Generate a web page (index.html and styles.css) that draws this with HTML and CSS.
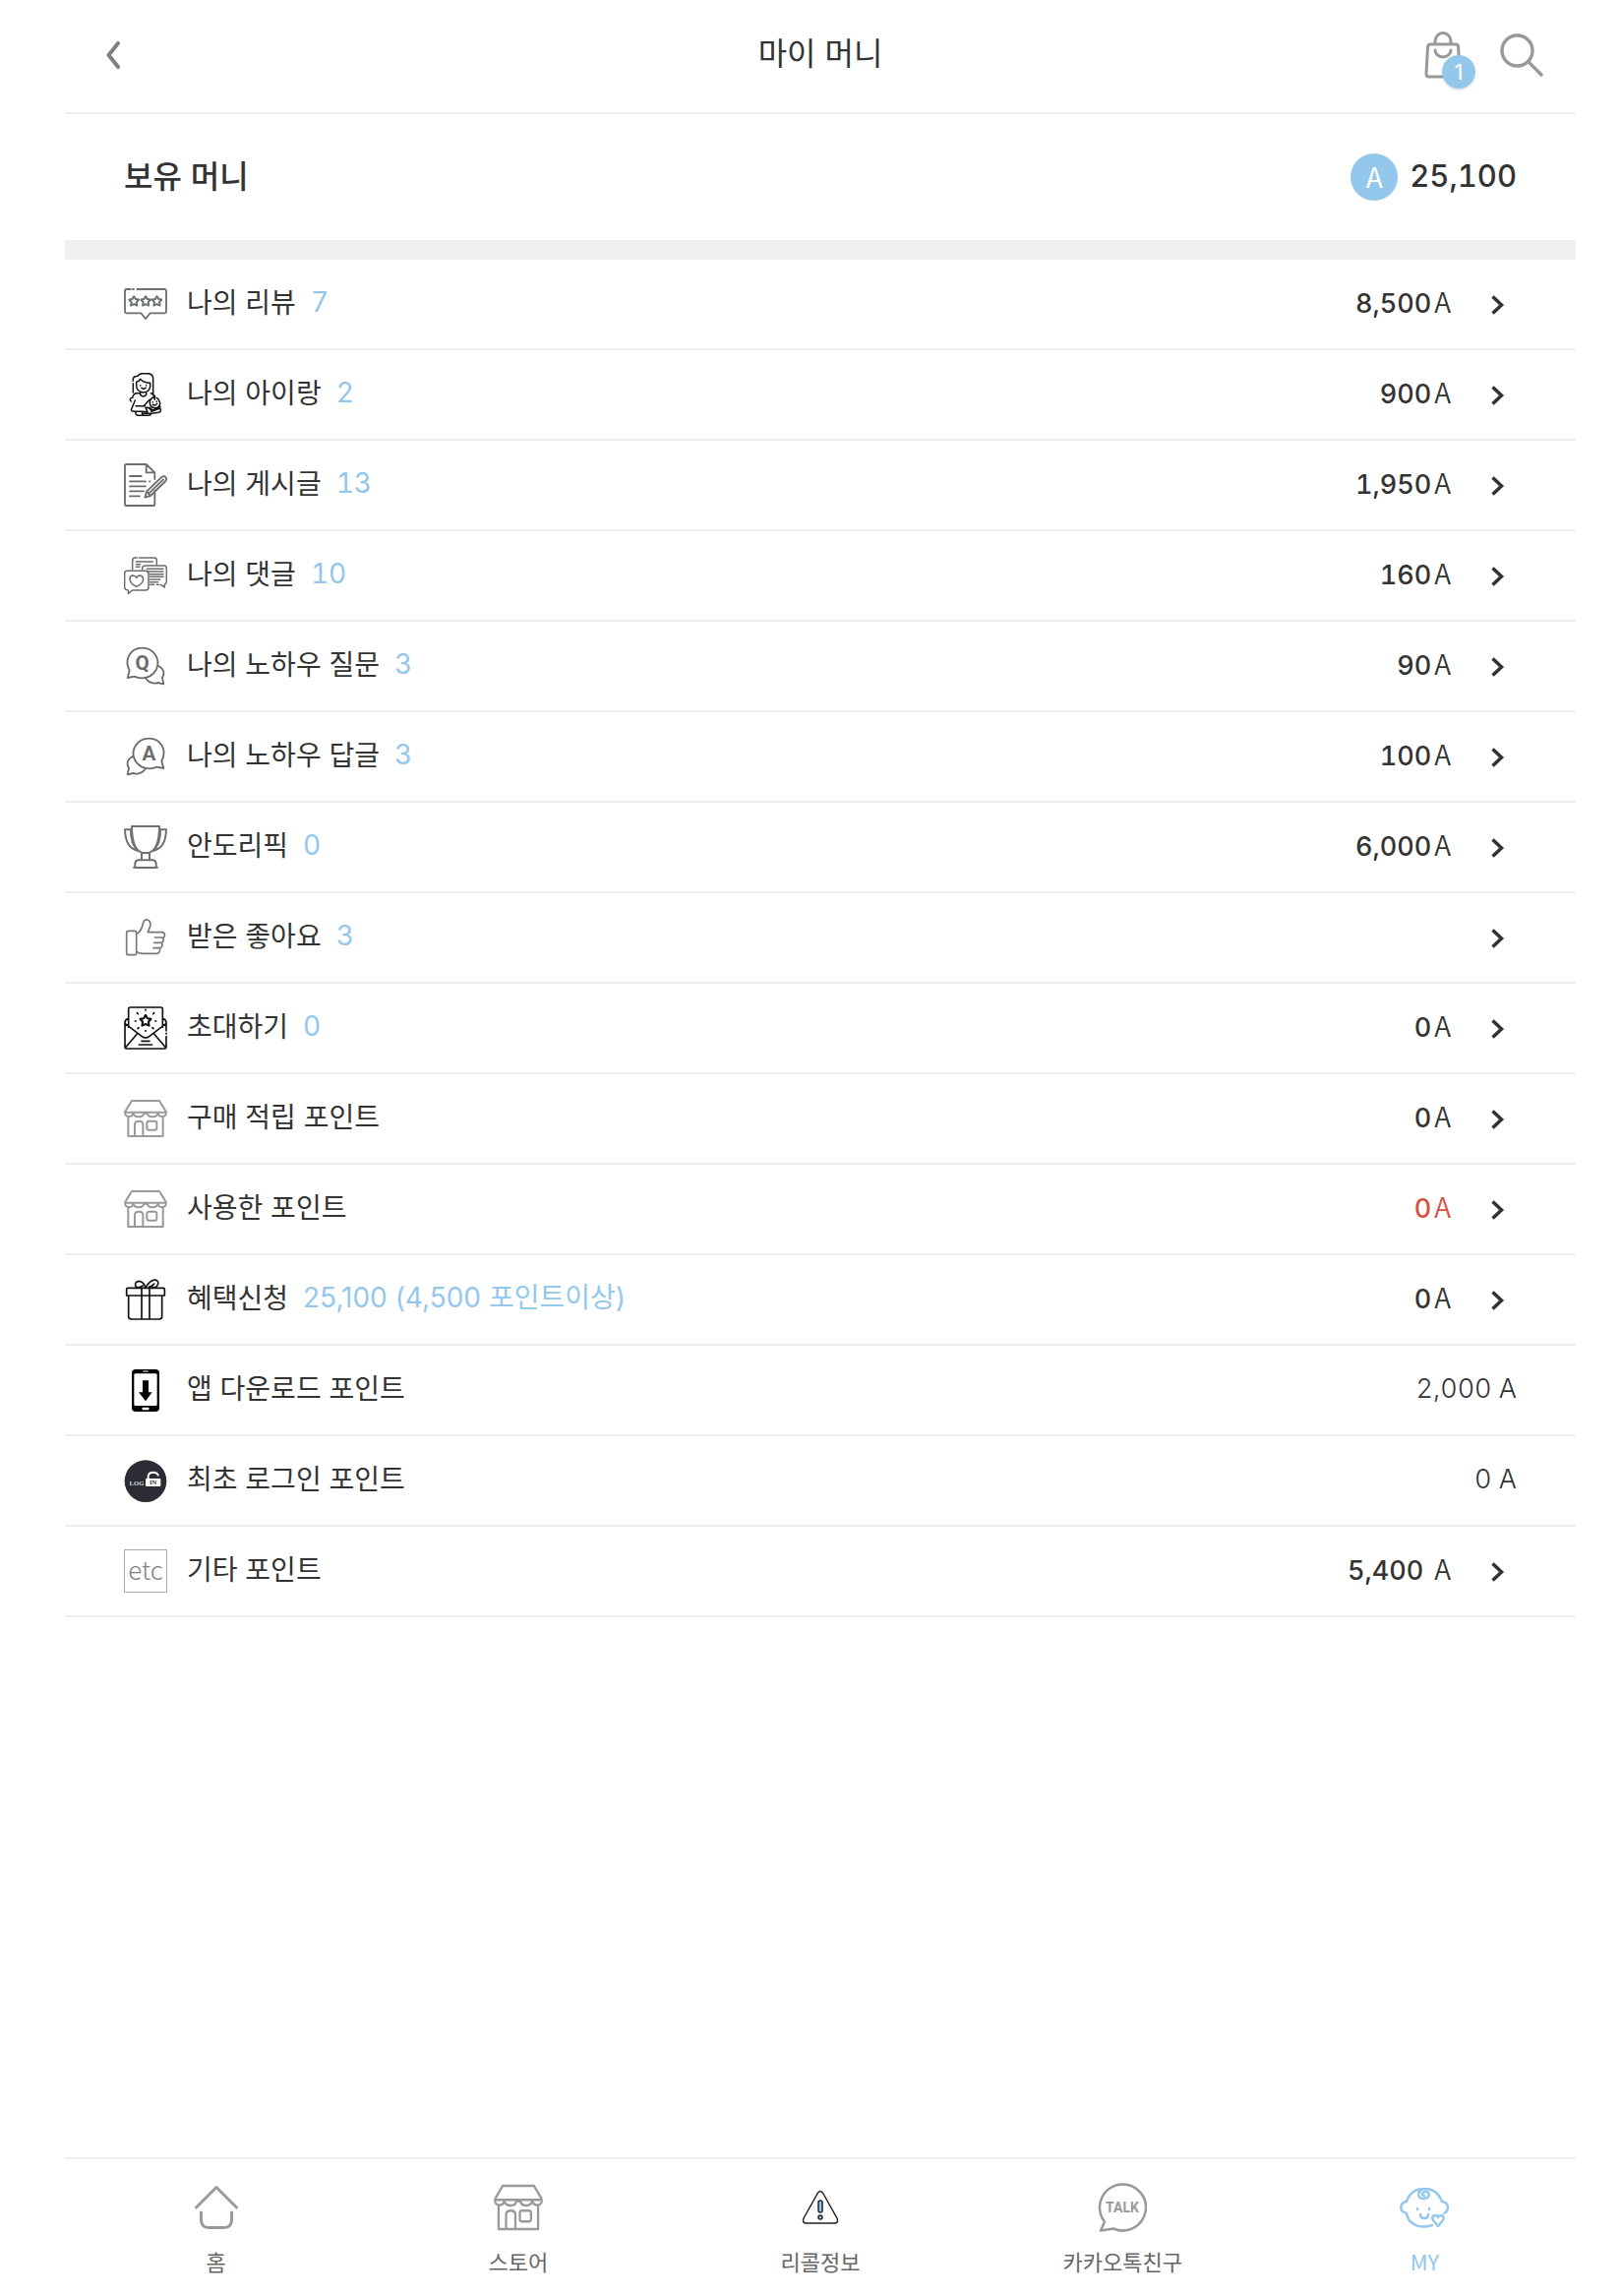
FILE: index.html
```html
<!DOCTYPE html>
<html lang="ko">
<head>
<meta charset="utf-8">
<meta name="viewport" content="width=device-width, initial-scale=1">
<title>마이 머니</title>
<link rel="stylesheet" href="styles.css">
</head>
<body>
<svg class="defs" aria-hidden="true">
  <symbol id="star" viewBox="-16 -16 32 32"><path d="M0-14 4.500-6 13.500-4.500 7 2.500 8.500 12 0 8-8.500 12-7 2.500-13.500-4.500-4.500-6Z"/></symbol>
  <symbol id="chevron" viewBox="0 0 14 20"><path d="M1.500 1.500 10.500 10 1.500 18.500" fill="none" stroke="currentColor" stroke-width="3.600"/></symbol>
  <symbol id="store" viewBox="0 0 132 132" preserveAspectRatio="none">
    <g fill="none" stroke="#999" stroke-width="6" stroke-linejoin="round">
      <path d="M24 12H108L128 44Q131 58 119 60Q106 61 104 50Q100 62 86 61Q74 61 72 52L66 50L60 52Q58 61 46 61Q32 62 28 50Q26 61 13 60Q1 58 4 44ZM4 47H128M28 47V52M104 47V52"/>
      <path d="M13 61V120H119V61M33 120V84Q33 74 46 74Q58 74 58 84V120"/>
      <rect x="70" y="74" width="30" height="27" rx="6"/>
    </g>
  </symbol>
</svg>
<div class="app">
  <header class="topbar">
    <button class="back" type="button" aria-label="뒤로">
      <svg width="14" height="28" viewBox="0 0 14 28" fill="none" stroke="#808080" stroke-width="4" stroke-linecap="round" stroke-linejoin="round"><path d="M12 2 2.500 14 12 26"/></svg>
    </button>
    <h1 class="title">마이 머니</h1>
    <nav class="tools" aria-label="도구">
      <a class="bag" href="#cart" aria-label="장바구니">
        <svg width="38" height="48" viewBox="0 0 38 48" fill="none" stroke="#999" stroke-width="3" stroke-linecap="round" stroke-linejoin="round"><path d="M6.500 13H32Q34.500 13 34.600 16L36 43Q36 46 33 46H5Q2 46 2 43L3.500 16Q3.700 13 6.500 13ZM11 12V10A8 8.500 0 0 1 27 10V12M11 19A8 7 0 0 0 27 19"/></svg>
        <span class="badge">1</span>
      </a>
      <a class="search" href="#search" aria-label="검색">
        <svg width="44" height="44" viewBox="0 0 44 44" fill="none" stroke="#999" stroke-width="3.400" stroke-linecap="round"><circle cx="17.500" cy="17.500" r="15.500"/><path d="M29 29 42 42"/></svg>
      </a>
    </nav>
  </header>

  <main>
    <section class="summary">
      <h2 class="summary-title">보유 머니</h2>
      <p class="balance"><span class="coin">A</span><strong class="total">25,100</strong></p>
    </section>

    <ul class="list">
      <li><a class="row" href="#review">
        <svg class="icon" viewBox="0 0 132 132" fill="none" stroke="#697174" stroke-width="5.500" stroke-linejoin="round" stroke-linecap="round"><path d="M20 21H8Q3 21 3 26V88Q3 94 8 94H52L66 111 80 94H124Q129 94 129 88V26Q129 21 124 21H40M27 21H30"/><use href="#star" x="13" y="40" width="35" height="35"/><use href="#star" x="49" y="40" width="35" height="35"/><use href="#star" x="83" y="40" width="35" height="35"/></svg>
        <span class="name">나의 리뷰</span><span class="count">7</span><span class="amount"><b>8,500</b>A</span><svg class="arrow"><use href="#chevron"/></svg></a></li>
      <li><a class="row" href="#child">
        <svg class="icon" viewBox="0 0 132 132" fill="none" stroke="#111" stroke-width="4.500" stroke-linejoin="round" stroke-linecap="round"><path d="M28 60V32M28 25V18Q30 10 42 10Q46 2 56 2H74Q89 3 89 18V66M38 28V40Q39 58 59 60Q78 58 80 42V31Q60 31 50 19Q46 27 38 28M50 38V39M68 38V39M54 46Q60 51 66 46M50 60V67Q59 77 68 67V60M48 62H38Q28 64 26 76Q14 78 22 87M82 62Q91 64 91 72M34 84 22 113Q23 118 30 118H56M36 101H64M60 102 78 82M36 118V124Q36 130 44 130H74Q83 130 82 124H60Q54 128 56 118L72 119 66 106Q80 104 84 118L110 108Q116 118 106 121L84 124M78 106 88 114 111 103"/><path d="M92 74Q78 78 79 92Q80 107 95 107Q110 106 110 92Q109 82 100 76M88 89V90M100 87V88M88 97Q95 102 101 94M94 70V82"/></svg>
        <span class="name">나의 아이랑</span><span class="count">2</span><span class="amount"><b>900</b>A</span><svg class="arrow"><use href="#chevron"/></svg></a></li>
      <li><a class="row" href="#posts">
        <svg class="icon" viewBox="0 0 132 132" fill="none" stroke="#6c6c6c" stroke-width="5.500" stroke-linejoin="round" stroke-linecap="round"><path d="M94 48V28L68 3H7Q3 3 3 7V125Q3 129 7 129H90Q94 129 94 125V84M68 3V28H94M18 39H53M18 55H66M78 55H79M18 70H66M18 85H60M18 100H48"/><path d="M64 104 69 86 116 41Q122 37 127 42Q132 48 127 54L81 99ZM69 86 81 99M76 92 120 49"/></svg>
        <span class="name">나의 게시글</span><span class="count">13</span><span class="amount"><b>1,950</b>A</span><svg class="arrow"><use href="#chevron"/></svg></a></li>
      <li><a class="row" href="#comments">
        <svg class="icon" viewBox="0 0 132 132" fill="none" stroke="#6c6c6c" stroke-width="4.500" stroke-linejoin="round" stroke-linecap="round"><path d="M40 12H34Q26 12 26 20V48M46 12H92Q100 12 100 20V34M37 24H88M37 32H50M37 40H48"/><path d="M56 48V43Q57 36 65 36H122Q130 36 130 44V84Q130 92 124 93V102L112 94M100 94H106M70 46H120M70 54H120M78 62H120M80 70H120M80 78H110M80 86H104M80 94H92"/><path d="M10 52H66Q75 52 75 61V102Q75 111 66 111H26L13 121V111Q2 110 2 102V61Q2 52 10 52ZM38 100Q17 90 18 76Q19 66 28 66Q36 67 38 73Q41 66 49 66Q59 68 59 77Q59 90 38 100Z"/></svg>
        <span class="name">나의 댓글</span><span class="count">10</span><span class="amount"><b>160</b>A</span><svg class="arrow"><use href="#chevron"/></svg></a></li>
      <li><a class="row" href="#questions">
        <svg class="icon" viewBox="0 0 132 132" fill="none" stroke="#6c6c6c" stroke-width="5.500" stroke-linejoin="round" stroke-linecap="round"><path d="M17 80C0 48 18 11 56 11C92 11 114 48 98 78C84 102 54 109 32 98L11 102Z"/><path d="M106 66Q130 80 117 102L121 121 104 117Q80 124 66 103"/><text class="glyph" x="56" y="77" font-size="62">Q</text></svg>
        <span class="name">나의 노하우 질문</span><span class="count">3</span><span class="amount"><b>90</b>A</span><svg class="arrow"><use href="#chevron"/></svg></a></li>
      <li><a class="row" href="#answers">
        <svg class="icon" viewBox="0 0 132 132" fill="none" stroke="#6c6c6c" stroke-width="5.500" stroke-linejoin="round" stroke-linecap="round"><path d="M115 80C132 48 114 11 76 11C40 11 18 48 34 78C48 102 78 109 100 98L121 102Z"/><path d="M26 66Q2 80 15 102L11 121 28 117Q52 124 66 103"/><text class="glyph" x="76" y="77" font-size="62">A</text></svg>
        <span class="name">나의 노하우 답글</span><span class="count">3</span><span class="amount"><b>100</b>A</span><svg class="arrow"><use href="#chevron"/></svg></a></li>
      <li><a class="row" href="#pick">
        <svg class="icon" viewBox="0 0 132 132" fill="none" stroke="#707070" stroke-width="6" stroke-linejoin="round"><path d="M24 3H108C108 54 98 77 76 84H56C34 77 24 54 24 3ZM24 13H3C4 46 15 73 44 78M21 13C20 42 28 65 44 78M108 13H129C128 46 117 73 88 78M111 13C112 42 104 65 88 78M54 84V105M78 84V105M34 129V118Q34 106 46 106H86Q98 106 98 118V129M28 129H104"/></svg>
        <span class="name">안도리픽</span><span class="count">0</span><span class="amount"><b>6,000</b>A</span><svg class="arrow"><use href="#chevron"/></svg></a></li>
      <li><a class="row" href="#likes">
        <svg class="icon" viewBox="0 0 132 132" fill="none" stroke="#787878" stroke-width="5" stroke-linejoin="round" stroke-linecap="round"><rect x="8" y="46" width="30" height="73" rx="6"/><path d="M38 56Q54 46 58 24Q62 10 71 12Q84 16 80 32L73 50H118Q126 52 124 62Q122 68 114 66H94M120 66Q122 80 114 82H92M116 82Q119 96 110 98H90M110 98Q111 113 102 115H58Q44 114 38 109"/></svg>
        <span class="name">받은 좋아요</span><span class="count">3</span><span class="amount"></span><svg class="arrow"><use href="#chevron"/></svg></a></li>
      <li><a class="row" href="#invite">
        <svg class="icon" viewBox="0 0 132 132" fill="none" stroke="#111" stroke-width="5" stroke-linejoin="round" stroke-linecap="round"><path d="M14 64V8Q14 3 19 3H113Q118 3 118 8V64M14 38Q3 40 3 50V122Q3 129 10 129H122Q129 129 129 122V92M129 82V84M129 74V50Q129 40 118 38M3 52 55 92Q66 100 77 92L129 52M5 125 40 84M127 125 92 84M54 106H78M46 117H86"/><path d="M66 10V12M40 20 43 23M92 20 89 23M34 45H37M95 45H98M42 68 45 65M90 68 87 65M66 74V76"/><use href="#star" x="46" y="24" width="40" height="40"/></svg>
        <span class="name">초대하기</span><span class="count">0</span><span class="amount"><b>0</b>A</span><svg class="arrow"><use href="#chevron"/></svg></a></li>
      <li><a class="row" href="#earned">
        <svg class="icon"><use href="#store"/></svg>
        <span class="name">구매 적립 포인트</span><span class="amount"><b>0</b>A</span><svg class="arrow"><use href="#chevron"/></svg></a></li>
      <li><a class="row" href="#used">
        <svg class="icon"><use href="#store"/></svg>
        <span class="name">사용한 포인트</span><span class="amount minus"><b>0</b>A</span><svg class="arrow"><use href="#chevron"/></svg></a></li>
      <li><a class="row" href="#benefit">
        <svg class="icon" viewBox="0 0 132 132" fill="none" stroke="#111" stroke-width="5" stroke-linejoin="round" stroke-linecap="round"><path d="M12 31H120Q124 31 124 35V54H8V35Q8 31 12 31ZM14 54V118Q14 126 22 126H108Q116 126 116 118V54M54 31V126M78 31V126M66 29Q59 10 45 10Q33 12 35 23Q37 31 45 29M46 30 57 24M66 29Q83 3 98 7Q109 12 102 23Q98 31 88 29M77 27Q88 25 92 18"/></svg>
        <span class="name">혜택신청</span><span class="count note">25,100 (4,500 포인트이상)</span><span class="amount"><b>0</b>A</span><svg class="arrow"><use href="#chevron"/></svg></a></li>
      <li><div class="row">
        <svg class="icon" viewBox="0 0 132 132"><rect x="24" y="3" width="84" height="129" rx="12" fill="#000"/><rect x="31" y="16" width="70" height="98" rx="4" fill="#fff"/><path d="M58 9H74" stroke="#fff" stroke-width="3"/><rect x="56" y="119" width="20" height="8" rx="2" fill="#fff"/><path d="M57 37H75V73H86L66 100 45 73H57Z" fill="#000"/></svg>
        <span class="name">앱 다운로드 포인트</span><span class="amount plain">2,000 A</span></div></li>
      <li><div class="row">
        <svg class="icon" viewBox="0 0 132 132"><circle cx="66" cy="68" r="64" fill="#2c2d34"/><rect x="66" y="60" width="46" height="24" rx="3" fill="#fff"/><path d="M74 62V52Q76 41 90 41Q103 42 105 52" fill="none" stroke="#fff" stroke-width="6"/><text class="login" x="39" y="80" fill="#ddd">LOG</text><text class="login" x="89" y="79" fill="#2c2d34">IN</text></svg>
        <span class="name">최초 로그인 포인트</span><span class="amount plain">0 A</span></div></li>
      <li><a class="row" href="#etc">
        <span class="icon etc">etc</span>
        <span class="name">기타 포인트</span><span class="amount"><b>5,400</b> A</span><svg class="arrow"><use href="#chevron"/></svg></a></li>
    </ul>
  </main>

  <nav class="tabs" aria-label="메뉴">
    <a class="tab" href="#home"><svg width="50" height="50" viewBox="0 0 50 50" fill="none" stroke="#999" stroke-width="3" stroke-linecap="round" stroke-linejoin="round"><path d="M4.500 25 25 4.500 45.500 25M9.500 30V38Q10 45.500 17 45.500H33Q40 45.500 40.500 38V30"/></svg><span>홈</span></a>
    <a class="tab" href="#store-page"><svg width="50" height="50" viewBox="0 0 50 50"><use href="#store" x="0" y="-2" width="50" height="54"/></svg><span>스토어</span></a>
    <a class="tab" href="#recall"><svg width="50" height="50" viewBox="0 0 50 50" stroke="#222" stroke-width="1.500" stroke-linejoin="round"><path d="M22 11Q25 6 28 11L42 36Q44 41 39 41H11Q6 41 8 36Z" fill="none"/><rect x="23" y="18" width="4" height="12" rx="2" fill="#94c7ec"/><circle cx="25" cy="35" r="2" fill="#94c7ec"/></svg><span>리콜정보</span></a>
    <a class="tab" href="#talk"><svg width="50" height="50" viewBox="0 0 50 50" fill="none" stroke="#999" stroke-width="2.500" stroke-linejoin="round"><path d="M25 1.500A23.500 23.500 0 1 1 16 46.500L3 48.500 7 39.500A23.500 23.500 0 0 1 25 1.500Z"/><text class="talk" x="25" y="30">TALK</text></svg><span>카카오톡친구</span></a>
    <a class="tab active" href="#my" aria-current="page"><svg width="50" height="50" viewBox="0 0 50 50" fill="none" stroke="#94c7ec" stroke-width="2.500" stroke-linecap="round" stroke-linejoin="round"><path d="M33 43C18 48 8 40 7 31C-1 29 0 20 7 19C10 10 17 6 25 6C34 6 40 11 43 19C50 20 51 28 45 31M25 6C18 7 17 16 24 16C31 16 31 9 27 9C22 9 22 13 25 13M21 32Q21 36 25 36Q29 36 29 32M18 26V27M30 26V27"/><path d="M39 44 34 38Q32 33 36 33Q39 33 39 35Q40 33 42 33Q46 34 44 38Z"/></svg><span>MY</span></a>
  </nav>
</div>
</body>
</html>
```
FILE: styles.css
```css
* {
  box-sizing: border-box;
}

body {
  margin: 0;
  padding-left: 20px;
  background: #fff;
  color: #333;
  font-family: "Noto Sans CJK KR", sans-serif;
  font-size: 28px;
  line-height: 40px;
}

h1,
h2,
p,
ul {
  margin: 0;
  padding: 0;
}

a {
  color: inherit;
  text-decoration: none;
}

.defs {
  display: none;
}

.app {
  display: flex;
  flex-direction: column;
  max-width: 1536px;
  min-height: 100vh;
  margin: 0 auto;
}

main {
  flex: 1;
}

/* Top bar */

.topbar {
  display: grid;
  grid-template-columns: 1fr auto 1fr;
  align-items: center;
  height: 116px;
  padding: 0 33px 2px;
  border-bottom: 2px solid #eee;
}

.back {
  display: flex;
  justify-self: start;
  padding: 0 9px;
  border: 0;
  background: none;
}

.title {
  padding-bottom: 8px;
  font-size: 32px;
  font-weight: 400;
}

.tools {
  display: flex;
  justify-content: flex-end;
  align-items: center;
  gap: 39px;
}

.bag,
.search {
  position: relative;
  display: flex;
}

.badge {
  position: absolute;
  right: -14px;
  bottom: -10px;
  width: 34px;
  height: 34px;
  border-radius: 50%;
  background: #94c7ec;
  box-shadow: 0 2px 2px rgba(0, 0, 0, 0.1);
  color: #fff;
  font: 22px/34px Inter, sans-serif;
  text-align: center;
}

/* Balance */

.summary {
  display: flex;
  justify-content: space-between;
  align-items: center;
  height: 148px;
  padding: 0 60px;
  border-bottom: 20px solid #f0f0f0;
}

.summary-title {
  padding-bottom: 6px;
  font-size: 32px;
  font-weight: 500;
}

.balance {
  display: flex;
  align-items: center;
  gap: 12px;
}

.coin {
  width: 48px;
  height: 48px;
  border-radius: 50%;
  background: #94c7ec;
  color: #fff;
  line-height: 46px;
  text-align: center;
}

.total {
  padding-bottom: 2px;
  font-family: Inter, sans-serif;
  font-size: 31px;
  font-variant-numeric: tabular-nums;
  font-weight: 500;
}

/* Point list */

.list {
  list-style: none;
}

.row {
  display: flex;
  align-items: center;
  height: 92px;
  padding: 0 60px;
  border-bottom: 2px solid #eee;
}

.icon {
  flex: none;
  width: 44px;
  height: 44px;
  margin-right: 20px;
}

.glyph,
.talk,
.login {
  stroke: none;
  font-family: Roboto, sans-serif;
  font-weight: 700;
  text-anchor: middle;
}

.glyph {
  fill: #6c6c6c;
}

.talk {
  fill: #999;
  font-size: 14px;
}

.login {
  font-family: "Liberation Serif", serif;
  font-size: 20px;
}

.etc {
  border: 1px solid #aaa;
  color: #808080;
  font-size: 26px;
  font-weight: 300;
  line-height: 38px;
  text-align: center;
}

.name {
  padding-bottom: 6px;
}

.count,
.amount {
  padding-bottom: 4px;
  font-variant-numeric: tabular-nums;
}

.count {
  margin-left: 15px;
  color: #94c7ec;
  font-family: Inter, "Noto Sans CJK KR", sans-serif;
}

.note {
  font-variant-numeric: normal;
}

.amount {
  margin-left: auto;
  font-weight: 350;
  white-space: pre;
}

.amount b {
  margin-right: 3px;
  font-family: Inter, sans-serif;
  font-size: 27px;
  font-weight: 500;
}

.plain {
  padding-bottom: 2px;
  font-family: Inter, sans-serif;
  font-size: 27px;
  font-weight: 300;
}

.minus {
  color: #d9503f;
}

.arrow {
  width: 14px;
  height: 20px;
  margin: 2px 12px 0 41px;
}

/* Bottom tabs */

.tabs {
  display: grid;
  grid-template-columns: repeat(5, 1fr);
  height: 141px;
  padding-top: 24px;
  border-top: 2px solid #eee;
}

.tab {
  display: flex;
  flex-direction: column;
  align-items: center;
  gap: 14px;
  color: #666;
  font-size: 22px;
  line-height: 30px;
}

.active {
  color: #94c7ec;
}
```
